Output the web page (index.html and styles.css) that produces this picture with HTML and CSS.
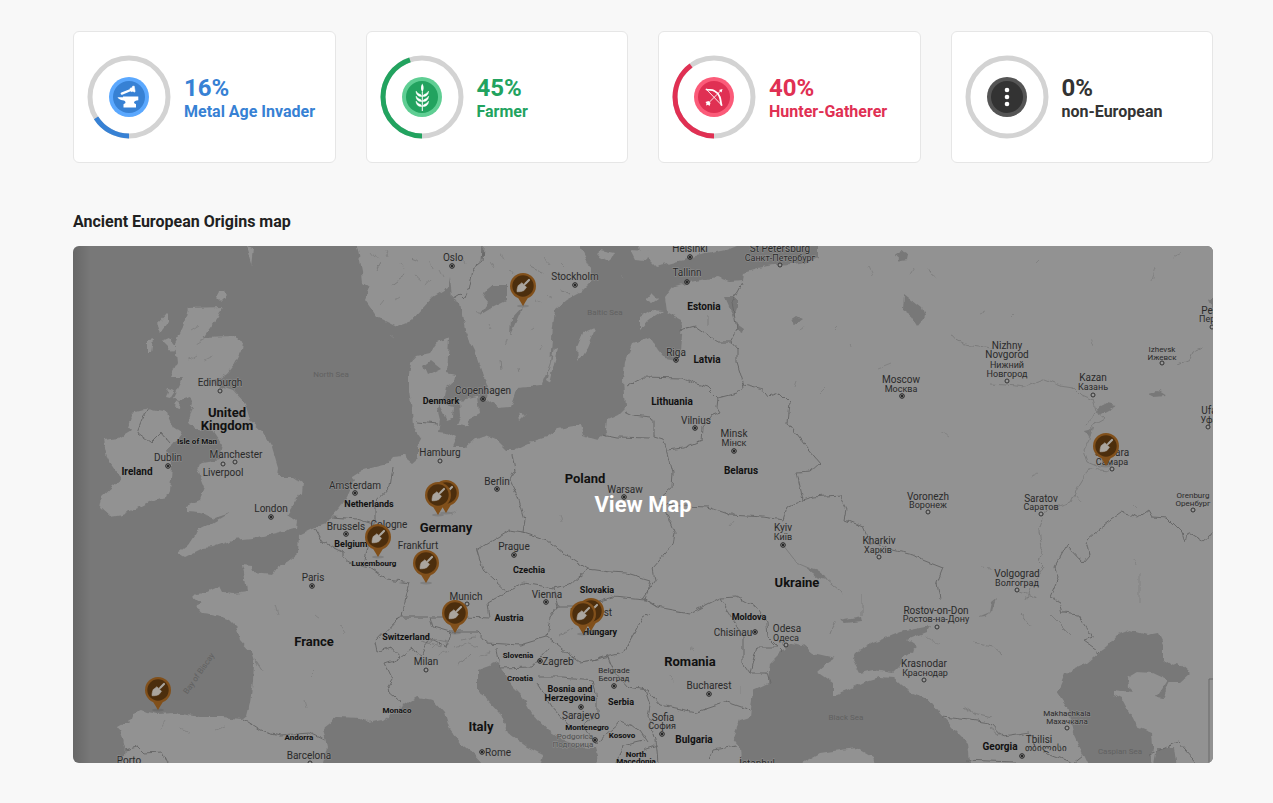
FILE: index.html
```html
<!DOCTYPE html>
<html lang="en">
<head>
<meta charset="utf-8">
<meta name="viewport" content="width=device-width, initial-scale=1">
<title>Ancient European Origins</title>
<link rel="stylesheet" href="styles.css">
</head>
<body>
<main class="page">
  <section class="cards" aria-label="Origins">
    <article class="card card-metal">
      <svg class="ring" viewBox="0 0 84 84" aria-hidden="true">
        <circle class="track" cx="42" cy="42" r="39"/>
        <circle class="arc" cx="42" cy="42" r="39" pathLength="100" stroke-dasharray="16 84" transform="rotate(90 42 42)"/>
        <circle class="rim" cx="42" cy="42" r="20"/><circle class="disc" cx="42" cy="42" r="16"/>
        <path d="M30.500 42.200h5.500v-.700h15.300v3.700c-2.500 0-4.300 1-4.300 2.800l2 1.300v3.200H36.500v-3.200l2-1.300c0-2-1-2.300-3-2.800-2-.400-4-1-5-3z" fill="#fff"/>
        <path d="M34.800 38.600l9.500-3.800" stroke="#fff" stroke-width="2.300" stroke-linecap="round"/>
        <path d="M43 33.200l2-.400.500-1.500 1.700-.300 1 5.500-1.200.700-1-1-2 .500z" fill="#fff" stroke="#fff" stroke-width=".5" stroke-linejoin="round"/>
      </svg>
      <div class="share"><div class="percent">16%</div><h2 class="name">Metal Age Invader</h2></div>
    </article>
    <article class="card card-farmer">
      <svg class="ring" viewBox="0 0 84 84" aria-hidden="true">
        <circle class="track" cx="42" cy="42" r="39"/>
        <circle class="arc" cx="42" cy="42" r="39" pathLength="100" stroke-dasharray="45 55" transform="rotate(90 42 42)"/>
        <circle class="rim" cx="42" cy="42" r="20"/><circle class="disc" cx="42" cy="42" r="16"/>
        <path d="M42.300 28.500q-2.600 4.500 0 9q2.600-4.500 0-9z" fill="#fff"/>
        <path d="M42.300 37v19" stroke="#fff" fill="none"/>
        <path id="leaves" d="M42 41.500c-1-3-4-2-6-5.500 0 4 3 6 6 5.500zm.600 0c1-3 4-2 6-5.500 0 4-3 6-6 5.500z" fill="#fff" stroke="#fff" stroke-width=".4"/>
        <use href="#leaves" y="5"/><use href="#leaves" y="10"/>
      </svg>
      <div class="share"><div class="percent">45%</div><h2 class="name">Farmer</h2></div>
    </article>
    <article class="card card-hunter">
      <svg class="ring" viewBox="0 0 84 84" aria-hidden="true">
        <circle class="track" cx="42" cy="42" r="39"/>
        <circle class="arc" cx="42" cy="42" r="39" pathLength="100" stroke-dasharray="40 60" transform="rotate(90 42 42)"/>
        <circle class="rim" cx="42" cy="42" r="20"/><circle class="disc" cx="42" cy="42" r="16"/>
        <g fill="none" stroke="#fff" stroke-linecap="round" stroke-linejoin="round"><path d="M34.500 34.500L49.500 50M37 47.500L49 35.500" stroke-width=".9"/><path d="M34.500 34.500c3 1 5-.500 8 1.500 3 1.500 4 3 5 5.500 1.500 3 1 5.500 2 8.500" stroke-width="1.800"/></g>
        <path d="M50.500 34l-1 3.500-2.500-2.500zM33.500 47l3-1 2 2-1 3-1.500-1.200-2 .700.500-2z" fill="#fff"/>
      </svg>
      <div class="share"><div class="percent">40%</div><h2 class="name">Hunter-Gatherer</h2></div>
    </article>
    <article class="card card-other">
      <svg class="ring" viewBox="0 0 84 84" aria-hidden="true">
        <circle class="track" cx="42" cy="42" r="39"/>
        <circle class="rim" cx="42" cy="42" r="20"/><circle class="disc" cx="42" cy="42" r="16"/>
        <g fill="#fff"><circle cx="42" cy="35" r="2.300"/><circle cx="42" cy="42" r="2.300"/><circle cx="42" cy="49" r="2.300"/></g>
      </svg>
      <div class="share"><div class="percent">0%</div><h2 class="name">non-European</h2></div>
    </article>
  </section>

  <h1 class="title">Ancient European Origins map</h1>
  <a class="map" href="#map">
    <svg class="map-art" viewBox="73 246 1140 517">
      <defs>
        <linearGradient id="edge"><stop offset="0" stop-color="#000" stop-opacity=".14"/><stop offset="1" stop-color="#000" stop-opacity="0"/></linearGradient>
        <filter id="rough" filterUnits="userSpaceOnUse" x="60" y="236" width="1165" height="540"><feTurbulence type="fractalNoise" baseFrequency=".12" numOctaves="2" seed="4"/><feDisplacementMap in="SourceGraphic" scale="6" xChannelSelector="R" yChannelSelector="G"/></filter>
        <g id="cap"><circle r="2.300" fill="none" stroke="#252525"/><circle r="1.200" fill="#252525"/></g>
        <circle id="city" r="2" fill="#999" stroke="#333"/>
        <g id="pin">
          <ellipse cy="20" rx="6" ry="1.500" fill="#555" opacity=".3"/>
          <path d="M-6 10L0 20 6 10z" fill="#81501b"/><circle r="13" fill="#81501b"/><circle r="10.700" fill="#4c2e0d"/>
          <path d="M-6 5.700C-6 3-5.500 1-4.700-.500L-1-3.300 3.500 1.300 1 4.500C-1 5.500-4 6-6 5.700z" fill="#aaa59e" stroke="#aaa59e" stroke-width=".6" stroke-linejoin="round"/><path d="M1-1l1.500-1.500" stroke="#aaa59e" stroke-width="1.300"/><path d="M2.500-2.500L6-6" stroke="#aaa59e" stroke-width="2.200" stroke-linecap="round"/>
        </g>
      </defs>
      <rect class="sea" x="73" y="246" width="1140" height="517"/>
      <g filter="url(#rough)">
        <g class="land">
          <path d="M123 775V763L125 747 122 735 118 727 132 719 134 713 142 710 147 712 157 714 175 713 200 717 222 717 242 719 247 715 250 703 253 680 254 662 251 652 240 640 237 627 230 620 222 617 210 613 202 612 195 607 202 604 193 597 197 593 207 592 220 586 223 592 233 593 247 591 245 578 242 565 252 566 253 572 273 574 277 568 290 560 298 553 299 535 313 528 327 523 332 516 340 507 347 497 355 480 352 477 363 470 387 464 393 457 403 456 412 463 418 458 418 447 422 440 413 427 412 410 409 392 409 373 411 363 417 356 430 353 438 342 449 337 448 357 447 373 455 375 454 382 447 387 445 397 437 408 440 420 438 432 447 433 457 438 453 447 465 447 475 439 487 436 497 440 507 450 513 450 530 442 547 437 558 429 580 425 583 435 597 439 607 433 606 427 607 420 618 415 625 408 623 380 625 363 633 343 650 337 658 350 665 358 675 360 680 352 682 320 667 312 665 297 673 287 690 282 717 277 730 282 742 281 743 272 757 268 773 265 792 264 807 262 818 257V236H1225V775z"/>
          <path d="M357 236L357 246 362 270 363 283 370 288 365 300 377 317 397 327 410 322 433 297 448 288 450 277 452 298 460 303 465 330 475 350 483 373 488 387 487 400 498 408 510 407 517 387 542 385 550 363 553 327 555 310 567 300 580 293 590 283 590 267 580 246V236z"/>
          <path d="M636 236L640 250 657 267 683 260 700 255 727 250 737 246V236z"/>
          <path d="M188 308L222 307 218 317 207 332 203 338 233 337 243 342 242 350 235 363 227 373 220 378 210 382 233 390 245 403 250 420 263 432 272 447 278 467 277 477 293 477 302 483 301 493 293 505 287 515 296 521 295 528 277 533 253 538 233 540 213 547 203 548 185 557 178 553 188 545 198 530 213 523 230 513 215 518 200 513 187 512 187 505 200 500 205 487 197 467 203 463 220 460 223 445 213 430 200 430 187 423 193 403 190 397 180 400 173 397 183 377 170 377 177 363 175 343 183 327z"/>
          <path d="M148 409L167 413 173 427 182 433 173 445 167 450 172 467 170 490 167 497 153 500 140 507 123 515 110 517 100 508 102 497 113 487 122 480 110 463 107 457 103 440 120 438 133 430 127 427 132 413z"/>
          <path d="M168 313L157 325 160 333 168 323zM148 340l5-1-2 15h-3zM162 341l7-3 8 10-4 5-5-6zM176 400l4 2-1 8-4-1zM168 388l6 2-5 8-4-1zM246 246l8 2-2 18-3-10zM219 291l5-1 2 7-5 5-4-4zM222 286l8-2M595 328L583 333 577 347 578 361 587 347zM558 348l-4 1-8 32 3 2zM518 412l7 4-5 5zM460 400L478 397 480 413 467 420 470 427 457 425 461 415zM438 403L453 407 452 418 447 420zM640 317l12-7 10 1-14 10-8 9zM645 300l7-8 7 7-7 5zM600 250l14 3-5 9-10-4zM630 250l20 1-5 10-10-1zM430 728L432 747 425 763 420 763 417 747 418 737z"/>
        </g>
        <g class="sea">
          <path d="M323 775V763L327 747 323 728 337 717 360 718 367 723 383 720 400 708 417 697 433 700 445 713 450 730 460 743 475 755 482 763V775z"/>
          <path d="M497 663L478 670 478 682 478 693 488 700 500 713 508 733 527 747 543 755 538 775H598L597 755 595 748 580 747 563 740 547 730 532 713 523 697 513 687 503 670z"/>
          <path d="M790 643L770 663 768 683 753 690 750 717 740 720 733 738 740 747 742 775H795L802 763 820 753 840 750 857 748 873 757 877 775H970V763L968 743 953 728 943 717 927 698 907 690 893 678 880 677 863 682 847 690 833 695 833 683 817 672 827 663 835 658 813 653 803 645z"/>
          <path d="M857 652L873 643 900 632 930 626 927 632 907 640 917 647 903 657 903 663 893 673 873 670 860 673 853 660z"/>
          <path d="M1107 647L1117 635 1130 630 1147 635 1158 633 1163 643 1163 660 1170 665 1178 662 1190 673 1180 682 1170 682 1162 698 1157 697 1168 680 1153 673 1137 672 1127 678 1128 687 1133 692 1113 690 1113 695 1123 700 1130 713 1137 727 1152 733 1153 747 1150 775H1093L1073 733 1067 707 1057 692 1065 673 1087 663 1100 652zM1157 748h17l4 27h-26z"/>
          <path d="M493 285L507 285 507 300 493 307 480 315 488 303 483 297 485 291zM523 306L510 335 511 319zM725 297L737 297 737 307 733 318 729 306zM736 324l7 5-1 4-6-3zM896 255l6-4 6 3-1 5-7 1zM904 294l18 14 3 8-8 10-6-10-8-5zM927 268l10 12-8-8zM790 320l6-4 6 3-7 5zM805 568l17 5 5 7-10-3zM1097 408l10-5 10 2-18 10zM1085 430l8-2-3 10zM840 620l22-4 1 5-18 2zM1148 394l10-3 8 5-12 1zM978 617l12-5 2-10 5-4-4 12-8 6zM423 366l8-6 10 8-14 7zM1208 300l6-4v16z"/>
        </g>
        <path class="river" d="M990 384l15 1 20 2 20-8 15 6 13 2 8 8 12 5 3 10 9 8-14 8-2 14-5 10 4 12 12 5M1098 412l-14 13M1109 471l-20-2-11 18-7 15-25 8-7 20 3 18-4 14 6 6-14 20-5 12M783 545l14 18 14 6M827 580l15 12M1178 364l12-5 3-7 10-4M950 336l15 8 28 4M862 615l0-20M835 620l-5 14M780 640l5 8M973 642l20 4 10 9M1020 592l18 6M1021 614l10 13M1050 615l20 20M708 315v10M255 660l8 12M560 636l14-8M500 360l1 10M518 368l1 4M410 258l8 3M390 286l15-11M376 270l5-9M530 266l15 7M560 290l10 4M420 641l22 5M425 645l10-6 15 4M460 640l15-3M470 655l-12 10M964 707l12 8M974 713l18 4M990 728l12 9"/>
        <path class="border" d="M483 246L482 262 472 270 468 290 465 298 460 293 452 298M148 409l-6 10-5 13 14 10 10-10 10 12M743 282L732 302 737 330 730 342M680 330L695 326 718 342 730 342 737 350 737 363 744 385M627 387L643 377 683 378 693 383 707 387 718 398 737 393 744 385M718 398L717 407 720 412 712 415 703 427 702 440 683 448 667 450M625 411L633 415 650 417 653 422 653 437 663 440 667 450M602 434L617 437 650 438M667 450L673 473 672 487 660 497 667 513 675 533 673 545 653 568 655 580 643 597M650 580L627 573 610 572 588 569 563 553 547 540 523 532M744 385L763 390 768 397 780 393 790 403 788 423 803 443 820 463 810 472 797 473 803 500 813 497 840 495 847 509 845 520 863 527 870 543 893 550 913 555 920 559 943 568 937 583 940 600M660 505L707 507 730 515 763 517 783 520 787 507 803 500M640 597L657 607 690 613 720 598 737 597 757 608 767 623 768 637 783 652M720 598L730 613 743 637 743 663 750 673 767 673 770 684M750 673L757 647 777 647M647 690L660 705 697 712 727 702 750 710M643 597L657 607M592 660L607 655 614 672 627 687 647 690M645 690L650 705 648 717 656 740 658 763M558 607L550 617 547 637 567 653 580 662 592 660 623 653 643 617 650 613M558 607L577 607 613 597 645 600 650 580M523 532L510 530 477 550 483 570 507 592 523 583 553 588 570 585 588 569M507 592L488 603 490 618 463 617 430 617 433 627 450 632 477 632 487 643 520 645 547 637M553 588L558 607M400 617L427 617M400 617L375 643 377 652 390 647 400 658 413 648 420 657 430 638 447 647 450 632M350 563L370 568 387 580 410 583 400 617M400 658L385 663 393 680 387 690 402 703M315 528L323 542 343 552 343 558 352 563M393 467L390 487 375 503 375 520 370 537 365 560M332 517l25 2 16 5M512 453L515 470 510 480 518 497 525 520 523 532M417 422L438 424M497 648L500 668 532 667 550 647M537 677L563 677 593 680 597 700 597 716 583 727 597 745M537 682L553 707 570 727M597 745L605 735 620 722 640 730 648 742M617 763l5-18 22-5M658 745l-15 5M710 760l3-10 23-4M243 719L260 730 280 735 310 733 325 740M125 750L137 747 143 753 163 752 168 763M1100 652L1083 640 1092 637 1078 615 1063 613 1060 602 1050 597 1058 578 1055 567 1067 545 1083 562 1089 555 1086 540 1100 528 1122 512 1138 517 1148 510 1152 517 1168 518 1182 532 1185 542 1187 532 1203 542 1215 532M942 717L970 720 990 723 1003 737 1030 733 1047 753 1073 763 1083 755M1150 755l28-13 22 25M965 760l50 2"/>
        <path class="flecks" d="M800 330l4-3M833 331l3-3M850 343l1 4M820 392l5-5M795 387l2-6M877 370l15-6M868 268l4 8M910 275l5-7M1010 316l3-3M980 314l5-2M1091 338l3 8M1036 263l3-3M1152 280l4-12M1173 257l9-4M1076 496l4 6M940 431l9 6M1032 476l5-3M620 275l4 3M390 335l4 3M275 605l3 10M315 615l6 5M310 675l5-5M340 625l5 8M160 730l6-10M180 728l10 4M215 730l10-4M305 700l2 8M560 515l2 7M450 515l6-3M600 475l4 2M730 525l4-5M690 650l4-3M670 675l3 8M740 685v10M1133 560l2 5M1140 573v30M1133 505l3 3M980 567l12 1M925 637l14 7M372 252l6 8M385 250l3 7M400 262l4 6M415 275l6 5M430 262l2 7M425 285l4-5M395 300l6-4M380 305l4-5M440 270l3 6M462 258l3 6M490 262l4 6M500 252l3 7M510 270l4 5M545 258l4 6M553 275l6-2M535 300l6 3M548 295l5 3M560 262l5 5M488 325l3 5M505 345l2-5M530 330l4-3M540 350l2-5M478 310l4 5M190 330l8-5M195 345l10-6M188 360l8-5M205 360l6-3M415 652l6 6M438 655l10-4M455 648l12-4M467 643l10 4M432 649l6-6M480 655l10-3"/>
      </g>
      <path class="border" d="M1213 679h-4v84"/>
      <g class="town">
        <text x="453" y="261">Oslo</text><text x="575" y="280">Stockholm</text><text x="690" y="252">Helsinki</text><text x="687" y="276">Tallinn</text><text x="780" y="252">St Petersburg</text>
        <text x="220" y="386">Edinburgh</text><text x="483" y="394">Copenhagen</text><text x="168" y="461">Dublin</text><text x="236" y="458">Manchester</text><text x="223" y="476">Liverpool</text><text x="440" y="456">Hamburg</text><text x="355" y="489">Amsterdam</text><text x="497" y="485">Berlin</text><text x="271" y="512">London</text><text x="346" y="530">Brussels</text><text x="389" y="528">Cologne</text><text x="418" y="549">Frankfurt</text><text x="313" y="581">Paris</text><text x="466" y="600">Munich</text><text x="514" y="550">Prague</text><text x="547" y="598">Vienna</text><text x="591" y="616">Budapest</text><text x="625" y="493">Warsaw</text><text x="676" y="356">Riga</text><text x="696" y="424">Vilnius</text><text x="734" y="437">Minsk</text><text x="901" y="383">Moscow</text><text x="1007" y="349">Nizhny</text><text x="1007" y="358">Novgorod</text><text x="1093" y="381">Kazan</text><text x="1112" y="456">Samara</text><text x="928" y="500">Voronezh</text><text x="1041" y="502">Saratov</text><text x="783" y="531">Kyiv</text><text x="879" y="544">Kharkiv</text><text x="1017" y="577">Volgograd</text><text x="936" y="614">Rostov-on-Don</text><text x="733" y="636">Chisinau</text><text x="787" y="632">Odesa</text><text x="924" y="667">Krasnodar</text><text x="709" y="689">Bucharest</text><text x="663" y="721">Sofia</text><text x="426" y="665">Milan</text><text x="558" y="665">Zagreb</text><text x="581" y="719">Sarajevo</text><text x="498" y="756">Rome</text><text x="309" y="759">Barcelona</text><text x="129" y="764">Porto</text><text x="1039" y="743">Tbilisi</text><text x="757" y="767">İstanbul</text><text x="1213" y="314">Perm</text><text x="1209" y="414">Ufa</text>
      </g>
      <g class="town small">
        <text x="780" y="261">Санкт-Петербург</text><text x="734" y="446">Мінск</text><text x="901" y="392">Москва</text><text x="1007" y="368">Нижний</text><text x="1007" y="377">Новгород</text><text x="1093" y="390">Казань</text><text x="1112" y="465">Самара</text><text x="928" y="508">Воронеж</text><text x="1041" y="510">Саратов</text><text x="783" y="540">Київ</text><text x="878" y="553">Харків</text><text x="1017" y="586">Волгоград</text><text x="936" y="622">Ростов-на-Дону</text><text x="786" y="641">Одеса</text><text x="925" y="676">Краснодар</text><text x="662" y="729">София</text><text x="1046" y="751">თბილისი</text><text x="1213" y="322">Пермь</text><text x="1209" y="423">Уфа</text>
      </g>
      <g class="town tiny">
        <text x="1162" y="352">Izhevsk</text><text x="1162" y="360">Ижевск</text><text x="1193" y="498">Orenburg</text><text x="1193" y="506">Оренбург</text><text x="614" y="673">Belgrade</text><text x="614" y="681">Београд</text><text x="1067" y="716">Makhachkala</text><text x="1067" y="724">Махачкала</text>
        <g class="pale"><text x="575" y="739">Podgorica</text><text x="573" y="747">Подгорица</text></g>
      </g>
      <g class="land-name large">
        <text x="227" y="417">United</text><text x="227" y="430">Kingdom</text><text x="585" y="483">Poland</text><text x="446" y="532">Germany</text><text x="314" y="646">France</text><text x="481" y="731">Italy</text><text x="797" y="587">Ukraine</text><text x="690" y="666">Romania</text>
      </g>
      <g class="land-name medium">
        <text x="137" y="475">Ireland</text><text x="704" y="310">Estonia</text><text x="707" y="363">Latvia</text><text x="672" y="405">Lithuania</text><text x="741" y="474">Belarus</text><text x="694" y="743">Bulgaria</text><text x="1000" y="750">Georgia</text>
      </g>
      <g class="land-name">
        <text x="441" y="404">Denmark</text><text x="369" y="507">Netherlands</text><text x="351" y="547">Belgium</text><text x="529" y="573">Czechia</text><text x="597" y="593">Slovakia</text><text x="509" y="621">Austria</text><text x="600" y="635">Hungary</text><text x="406" y="640">Switzerland</text><text x="570" y="692">Bosnia and</text><text x="570" y="701">Herzegovina</text><text x="621" y="705">Serbia</text><text x="749" y="620">Moldova</text>
      </g>
      <g class="land-name little">
        <text x="197" y="444">Isle of Man</text><text x="374" y="566">Luxembourg</text><text x="518" y="658">Slovenia</text><text x="520" y="681">Croatia</text><text x="397" y="713">Monaco</text><text x="299" y="740">Andorra</text><text x="587" y="730">Montenegro</text><text x="622" y="738">Kosovo</text><text x="636" y="757">North</text><text x="636" y="764">Macedonia</text>
      </g>
      <g class="sea-name">
        <text x="331" y="377">North Sea</text><text x="605" y="315">Baltic Sea</text><text x="846" y="720">Black Sea</text><text x="1120" y="754">Caspian Sea</text><text transform="translate(201 675) rotate(-55)">Bay of Biscay</text>
      </g>
      <g>
        <use href="#cap" x="452" y="266"/><use href="#cap" x="575" y="285"/><use href="#cap" x="690" y="257"/><use href="#cap" x="687" y="282"/><use href="#cap" x="483" y="399"/><use href="#cap" x="168" y="466"/><use href="#cap" x="355" y="493"/><use href="#cap" x="497" y="489"/><use href="#cap" x="271" y="517"/><use href="#cap" x="346" y="534"/><use href="#cap" x="312" y="586"/><use href="#cap" x="514" y="555"/><use href="#cap" x="546" y="602"/><use href="#cap" x="624" y="497"/><use href="#cap" x="676" y="360"/><use href="#cap" x="695" y="428"/><use href="#cap" x="734" y="451"/><use href="#cap" x="902" y="396"/><use href="#cap" x="783" y="545"/><use href="#cap" x="755" y="632"/><use href="#cap" x="709" y="694"/><use href="#cap" x="662" y="734"/><use href="#cap" x="540" y="661"/><use href="#cap" x="581" y="707"/><use href="#cap" x="482" y="752"/><use href="#cap" x="1022" y="756"/><use href="#cap" x="614" y="686"/><use href="#cap" x="595" y="740"/>
        <use href="#city" x="780" y="265"/><use href="#city" x="220" y="391"/><use href="#city" x="223" y="464"/><use href="#city" x="235" y="462"/><use href="#city" x="440" y="461"/><use href="#city" x="467" y="604"/><use href="#city" x="426" y="670"/><use href="#city" x="1007" y="381"/><use href="#city" x="1093" y="395"/><use href="#city" x="1112" y="469"/><use href="#city" x="928" y="512"/><use href="#city" x="1041" y="514"/><use href="#city" x="879" y="557"/><use href="#city" x="1017" y="590"/><use href="#city" x="937" y="627"/><use href="#city" x="786" y="645"/><use href="#city" x="924" y="680"/><use href="#city" x="1162" y="363"/><use href="#city" x="1193" y="510"/><use href="#city" x="1067" y="728"/><use href="#city" x="1208" y="427"/><use href="#city" x="1212" y="327"/><use href="#city" x="310" y="763"/>
      </g>
      <g>
        <use href="#pin" x="523" y="286"/><use href="#pin" x="158" y="690"/><use href="#pin" x="446" y="493"/><use href="#pin" x="438" y="495"/><use href="#pin" x="378" y="537"/><use href="#pin" x="426" y="563"/><use href="#pin" x="455" y="613"/><use href="#pin" x="591" y="611"/><use href="#pin" x="583" y="614"/><use href="#pin" x="1106" y="446"/>
      </g>
      <rect x="73" y="246" width="18" height="517" fill="url(#edge)"/>
    </svg>
    <span class="map-label">View Map</span>
  </a>
</main>
</body>
</html>
```

FILE: styles.css
```css
* { box-sizing: border-box; }

body {
  margin: 0;
  background: #f8f8f8;
  color: #212121;
  font-family: Roboto, "Noto Sans", sans-serif;
}

.page { padding: 31px 60px 40px 73px; }

.cards {
  display: grid;
  grid-template-columns: repeat(4, 1fr);
  gap: 30px;
}

.card {
  display: flex;
  align-items: center;
  gap: 13px;
  padding: 23px 13px;
  background: #fff;
  border: 1px solid #e6e6e6;
  border-radius: 6px;
  color: var(--main);
}

.card-metal { --main: #3781d4; --rim: #5ba8fe; }
.card-farmer { --main: #22a35f; --rim: #5fce93; }
.card-hunter { --main: #e03053; --rim: #fb5b79; }
.card-other { --main: #333; --rim: #555; }

.ring { flex: none; width: 84px; height: 84px; }
.track { fill: none; stroke: #d3d3d3; stroke-width: 5; }
.arc { fill: none; stroke: var(--main); stroke-width: 5; }
.rim { fill: var(--rim); }
.disc { fill: var(--main); }

.share { padding-top: 2px; }
.percent { font-size: 24px; font-weight: 700; line-height: 28px; }
.name { margin: 0; font-size: 16px; font-weight: 700; line-height: 20px; white-space: nowrap; }

.title { margin: 49px 0 14px; font-size: 16px; font-weight: 700; line-height: 20px; }

.map {
  display: grid;
  overflow: hidden;
  border-radius: 6px;
  color: #fff;
  text-decoration: none;
}
.map-art { grid-area: 1 / 1; display: block; width: 100%; height: auto; }
.map-label {
  grid-area: 1 / 1;
  place-self: center;
  z-index: 1;
  font-size: 22px;
  font-weight: 700;
  line-height: 26px;
}

.sea { fill: #787878; }
.land { fill: #929292; }
.border { fill: none; stroke: #696969; stroke-width: 1; }
.river { fill: none; stroke: #7c7c7c; stroke-width: 1; }
.flecks { fill: none; stroke: #828282; stroke-width: 1; }

.map-art text { text-anchor: middle; }
.town {
  fill: #2a2a2a;
  font-size: 10px;
  paint-order: stroke;
  stroke: #929292;
  stroke-width: 1;
}
.small { font-size: 9px; }
.tiny { font-size: 8px; }
.pale { fill: #505050; }
.land-name {
  fill: #111;
  font-size: 9px;
  font-weight: 700;
  paint-order: stroke;
  stroke: #929292;
  stroke-width: 1;
}
.large { font-size: 13px; }
.medium { font-size: 10px; }
.little { font-size: 8px; }
.sea-name { fill: #616161; font-size: 8px; }
```
